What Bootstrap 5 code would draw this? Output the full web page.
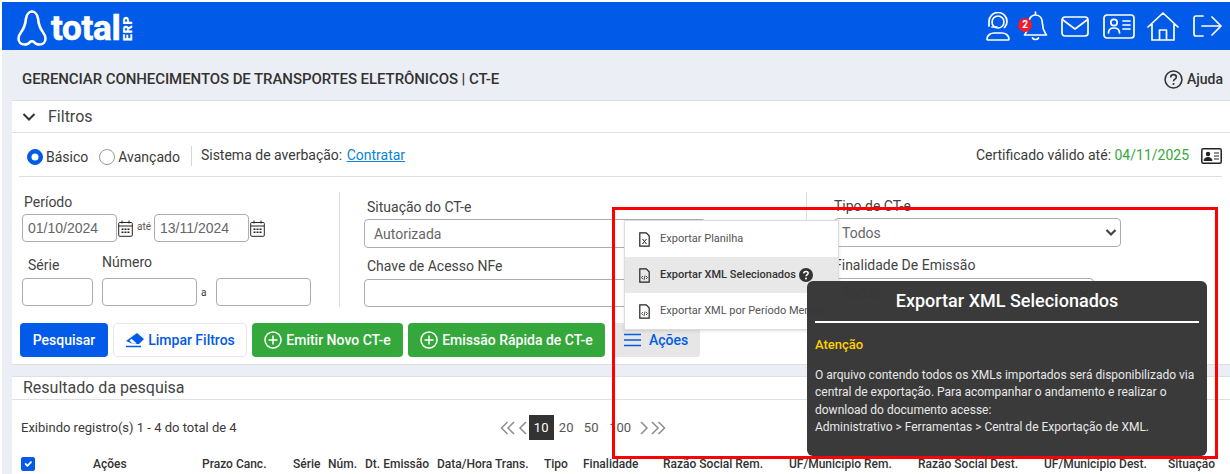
<!DOCTYPE html>
<html lang="pt-BR"><head><meta charset="utf-8"><title>CT-e</title>
<link href="https://cdn.jsdelivr.net/npm/bootstrap@5.3.0/dist/css/bootstrap.min.css" rel="stylesheet">
<style>
html,body{height:474px;overflow:hidden}
body{font-family:Roboto,sans-serif;background:#fff;color:#3a3a3a;font-size:14px;padding:2px 0 0 2px;position:relative}
.shell{background:#ebeef4;height:472px;overflow:hidden}
.topbar{background:#015be8;height:48px;padding:0 8px 0 15px}
.logo-word{color:#fff;font:700 35px/1 Roboto,sans-serif;margin:4px 0 0 3px;letter-spacing:-.3px;-webkit-text-stroke:.6px #fff}
.logo-erp{color:#fff;font:900 13px/1 Roboto,sans-serif;writing-mode:vertical-rl;transform:rotate(180deg);margin:6px 0 0 1px;letter-spacing:.3px}
.tb-ico{fill:none;stroke:#fff;stroke-width:1.7;stroke-linecap:round;stroke-linejoin:round;display:block}
.bell-wrap{position:relative}
.bell-badge{position:absolute;left:-5px;top:7px;width:14px;height:14px;border-radius:50%;background:#ed1c2e;color:#fff;font:700 10px/14px Roboto,sans-serif;text-align:center}
.title-bar{height:50px;padding:8px 7px 0 20px}
.page-title{font-weight:500;font-size:15px;color:#333;margin:0;letter-spacing:-.08px}
.help-lnk{font-weight:500;font-size:14px;color:#333}
.panel{background:#fff;margin-left:10px;border-top:1px solid #dcdfe4;border-bottom:1px solid #dcdfe4}
.panel-head{height:32px;border-bottom:1px solid #dcdfe4;padding-left:10px;font-size:16px;color:#444}
.status-row{height:44px;margin:0 8px 0 7px;border-bottom:1px solid #dcdfe4;padding:2px 0 0 8px;font-size:14px}
.status-row .form-check-input{width:16px;height:16px;margin:0 3px 0 0;flex:none;border-color:#999}
.rad-group{margin-top:3px}
.form-check-input:checked{background-color:#015be8;border-color:#015be8}
.vbar{width:1px;height:20px;background:#d6d6d6;margin:0 9px 0 11px}
.status-row a{color:#0a84d6;margin-left:1px}
.ok-date{color:#34a83a}
.filters{display:grid;grid-template-columns:328px 467px 1fr;height:146px;padding-top:15px}
.fcol1{padding:0 0 0 10px;border-right:1px solid #dedede;height:115px}
.fcol2{padding:0 0 0 24px;border-right:1px solid #dedede;height:115px}
.fcol3{padding:0 0 0 27px}
.lbl{font-size:14px;color:#444;display:block;line-height:16px}
.form-control.inp,.form-select.inp{height:28px;min-height:0;font-size:14px;color:#666;border-color:#adadad;border-radius:4px;padding:2px 5px;font-family:Roboto,sans-serif}
.form-select.inp{padding:4px 24px 2px 9px;height:29px;background-position:right 3px center;background-size:12px 9px;background-image:url("data:image/svg+xml,%3csvg xmlns='http://www.w3.org/2000/svg' viewBox='0 0 12 9'%3e%3cpath fill='none' stroke='%23444' stroke-width='2.200' d='M1.500 2l4.500 4.500L10.500 2'/%3e%3c/svg%3e")}
.inp-date{width:95px;font-family:"Liberation Sans",sans-serif!important}
.cal{display:block;margin:1px 0 0 1px;flex:none}
.ate{font-size:10px;margin:-3px 3px 0 4px;color:#555}
.w-serie{width:71px}.w-num{width:95px}.w-wide{width:342px}.w-chave{width:419px}.w-tipo{width:287px}.w-fin{width:262px}
.act-row{padding-left:8px;gap:5px;height:41px;padding-bottom:7px}
.act{height:34px;border-radius:4px;font-weight:500;font-size:14px;padding:0;display:flex;align-items:center;justify-content:center;gap:3px;border:0}
.act-blue{background:#015be8;color:#fff;width:88px}
.act-clear{background:#fff;border:1px solid #e6e6e6;color:#015be8;width:134px}
.act-green{background:#34a83a;color:#fff;gap:4px}
.w-emit{width:151px}.w-rapid{width:197px}
.act-more{background:#e6e6e6;color:#015be8;width:88px;margin-left:2px;gap:8px;border-radius:0 0 4px 4px}
.panel-res{margin-top:11px;height:120px;overflow:hidden}
.res-head{height:23px;border-bottom:1px solid #dcdfe4;padding-left:11px;font-size:16px;color:#444;line-height:21px}
.pager-row{height:55px;padding:0 0 0 9px;font-size:13px;position:relative}
.pager{margin-left:263px;gap:0;color:#555}
.pg-num{display:block;width:25px;line-height:25px;text-align:center;font-size:13px}
.pg-on{background:#333;color:#fff}
.pg-ar{fill:none;stroke:#8c8c8c;stroke-width:1.5;display:block}
.tbl-head{table-layout:fixed;width:1210px;margin:0 0 0 9px;font-size:12px;font-weight:500;color:#333}
.tbl-head th{font-weight:500;padding:0;white-space:nowrap;line-height:18px;vertical-align:middle;border:0;overflow:visible}
.tbl-head .form-check-input{width:14px;height:14px;margin:0;display:block;border-radius:2px}
.red-box{position:absolute;left:612px;top:207px;width:606px;height:252px;border:3px solid #f00;pointer-events:none;z-index:5}
.drop-menu{position:absolute;left:624px;top:220px;width:215px;height:110px;background:rgba(255,255,255,.97);border:1px solid #dcdcdc;box-shadow:0 1px 3px rgba(0,0,0,.12);padding:0;z-index:3;overflow:hidden;display:block;border-radius:0;min-width:0;margin:0}
.drop-item{height:36px;padding:0 0 0 14px;font-size:11px;color:#555;white-space:nowrap;gap:10px}
.drop-hot{background:#e8e8e8;font-weight:500;color:#333}
.tip{position:absolute;left:807px;top:281px;width:400px;height:175px;background:rgba(54,54,54,.98);border-radius:6px;color:#eee;padding:0 8px;z-index:4}
.tip-t{font-size:18px;font-weight:500;text-align:center;color:#fff;line-height:39px;height:42px;margin:0;border-bottom:2px solid #fff}
.tip-a{color:#ffd000;font-weight:500;font-size:13px;margin:0;line-height:16px;padding-top:14px}
.tip-b{font-size:12px;line-height:17.400px;margin:14px 0 0;color:#e8e8e8}
</style></head><body>
<div class="shell">
<header class="topbar d-flex align-items-center justify-content-between">
  <div class="d-flex align-items-center">
    <svg width="31" height="36" viewBox="0 0 31 36" class="tb-ico" style="stroke-width:2.600;margin-top:4px"><path d="M15.500 1.500c-3.500 0-6 3-6.500 7-.5 5-1.500 9-4.500 13-1.500 2-3 4-3 7 0 3.500 2.500 6 6 6 3 0 4.500-1 5.500-2.500 1-1 3-1 4 0 1 1.500 2.500 2.500 5.500 2.500 3.500 0 6-2.500 6-6 0-3-1.500-5-3-7-3-4-4-8-4.500-13-.5-4-3-7-6.500-7z"/></svg>
    <span class="logo-word">total</span><span class="logo-erp">ERP</span>
  </div>
  <div class="d-flex align-items-center">
    <svg width="26" height="29" viewBox="0 0 26 29" class="tb-ico"><circle cx="13" cy="10" r="6"/><path d="M4 14V9.500a9 9 0 0 1 18 0c0 2.500-1 4.500-2.500 6"/><path d="M7 15h5"/><path d="M2 27c0-4 4-6 7-6h8c3 0 7 2 7 6 0 .6-.4 1-1 1H3c-.6 0-1-.4-1-1z"/></svg>
    <div class="bell-wrap" style="margin-left:12px"><svg width="25" height="30" viewBox="0 0 25 30" class="tb-ico"><path d="M12.500 1v3M12.500 4c-4.500 0-7 4-7 9 0 6-2 8-4 11h22c-2-3-4-5-4-11 0-5-2.500-9-7-9zM9.500 27c1 2 5 2 6 0"/></svg><span class="bell-badge">2</span></div>
    <svg width="28" height="21" viewBox="0 0 28 21" class="tb-ico" style="margin-left:13px"><rect x="1" y="1" width="26" height="19" rx="3"/><path d="M2 4l12 9 12-9"/></svg>
    <svg width="32" height="25" viewBox="0 0 32 25" class="tb-ico" style="margin-left:14px"><rect x="1" y="1" width="30" height="23" rx="3"/><circle cx="11" cy="8.500" r="3.200"/><path d="M5.500 19c0-3.500 2.500-5 5.500-5s5.500 1.500 5.500 5M20 7h7M20 11h7M20 15h7"/></svg>
    <svg width="32" height="29" viewBox="0 0 32 29" class="tb-ico" style="margin-left:12px"><path d="M1 15L16 1l15 14M5 12v16h22V12M12.500 28V18h7v10"/></svg>
    <svg width="29" height="22" viewBox="0 0 29 22" class="tb-ico" style="margin-left:14px"><path d="M10 1H3a2 2 0 0 0-2 2v16a2 2 0 0 0 2 2h7M9 11h19M19 2l9 9-9 9"/></svg>
  </div>
</header>
<div class="title-bar d-flex align-items-center justify-content-between">
  <h1 class="page-title">GERENCIAR CONHECIMENTOS DE TRANSPORTES ELETRÔNICOS | CT-E</h1>
  <span class="help-lnk d-flex align-items-center gap-1"><svg width="19" height="19" viewBox="0 0 18 18"><circle cx="9" cy="9" r="8" fill="none" stroke="#333" stroke-width="1.500"/><path d="M6.300 7c0-1.700 1.200-2.600 2.700-2.600s2.700.9 2.700 2.300c0 2-2.700 2-2.700 4" fill="none" stroke="#333" stroke-width="1.500"/><circle cx="9" cy="13.300" r="1" fill="#333"/></svg>Ajuda</span>
</div>
<section class="panel">
  <div class="panel-head d-flex align-items-center"><svg width="14" height="10" viewBox="0 0 14 10" style="margin-right:12px"><path d="M1.500 2l5.500 5.500L12.500 2" fill="none" stroke="#333" stroke-width="2"/></svg>Filtros</div>
  <div class="status-row d-flex align-items-center justify-content-between">
    <div class="d-flex align-items-center">
      <div class="rad-group d-flex align-items-center">
      <input class="form-check-input" type="radio" name="m" checked aria-label="Básico"><span style="margin-right:11px">Básico</span>
      <input class="form-check-input" type="radio" name="m" aria-label="Avançado"><span>Avançado</span>
      </div>
      <span class="vbar"></span><span>Sistema de averbação: <a href="#">Contratar</a></span>
    </div>
    <div class="d-flex align-items-center"><span>Certificado válido até: <span class="ok-date">04/11/2025</span></span>
      <svg width="21" height="16" viewBox="0 0 21 16" style="margin-left:12px"><rect x=".8" y=".8" width="19.400" height="14.400" rx="1.500" fill="none" stroke="#222" stroke-width="1.500"/><circle cx="7" cy="6" r="2.200" fill="#222"/><path d="M3 12.500c0-2 2-3 4-3s4 1 4 3zM13 5h5M13 8h5M13 11h5" fill="#222" stroke="#222"/></svg></div>
  </div>
  <div class="filters">
    <div class="fcol1">
      <label class="lbl" style="padding-left:2px;margin:2px 0 4px">Período</label>
      <div class="d-flex align-items-center">
        <input class="form-control inp inp-date" value="01/10/2024" aria-label="Início">
        <svg class="cal" width="15" height="17" viewBox="0 0 15 17"><rect x=".7" y="2.500" width="13.600" height="13.800" rx="1" fill="none" stroke="#222"/><path d="M1 6h13M4 .5v3M11 .5v3" stroke="#222"/><path d="M3.500 8.500h2v1.500h-2zM6.500 8.500h2v1.500h-2zM9.500 8.500h2v1.500h-2zM3.500 11.500h2v1.500h-2zM6.500 11.500h2v1.500h-2zM9.500 11.500h2v1.500h-2z" fill="#222"/></svg>
        <span class="ate">até</span>
        <input class="form-control inp inp-date" value="13/11/2024" aria-label="Fim">
        <svg class="cal" width="15" height="17" viewBox="0 0 15 17"><rect x=".7" y="2.500" width="13.600" height="13.800" rx="1" fill="none" stroke="#222"/><path d="M1 6h13M4 .5v3M11 .5v3" stroke="#222"/><path d="M3.500 8.500h2v1.500h-2zM6.500 8.500h2v1.500h-2zM9.500 8.500h2v1.500h-2zM3.500 11.500h2v1.500h-2zM6.500 11.500h2v1.500h-2zM9.500 11.500h2v1.500h-2z" fill="#222"/></svg>
      </div>
      <div class="d-flex" style="margin-top:12px">
        <div style="margin-right:9px"><label class="lbl" style="padding:3px 0 5px 6px">Série</label><input class="form-control inp w-serie" aria-label="Série"></div>
        <div><label class="lbl" style="padding-bottom:8px">Número</label>
          <div class="d-flex align-items-center"><input class="form-control inp w-num" aria-label="Número inicial"><span style="font-size:10px;margin:0 10px 0 4px">a</span><input class="form-control inp w-num" aria-label="Número final"></div></div>
      </div>
    </div>
    <div class="fcol2">
      <label class="lbl" style="padding-left:3px;margin:7px 0 4px">Situação do CT-e</label>
      <select class="form-select inp w-wide" aria-label="Situação"><option>Autorizada</option></select>
      <label class="lbl" style="padding-left:3px;margin:10px 0 5px">Chave de Acesso NFe</label>
      <input class="form-control inp w-chave" aria-label="Chave">
    </div>
    <div class="fcol3">
      <label class="lbl" style="margin:6px 0 4px">Tipo de CT-e</label>
      <select class="form-select inp w-tipo" style="padding-left:7px" aria-label="Tipo"><option>Todos</option></select>
      <label class="lbl" style="margin:10px 0 5px">Finalidade De Emissão</label>
      <select class="form-select inp w-fin" style="margin-left:-2px" aria-label="Finalidade"><option>Todas</option></select>
    </div>
  </div>
  <div class="act-row d-flex">
    <button class="btn act act-blue">Pesquisar</button>
    <button class="btn act act-clear"><svg width="20" height="16" viewBox="0 0 20 16"><path d="M12 1l7 6-5 5H8L1 9z" fill="#015be8"/><path d="M1 14.500h15" stroke="#015be8" stroke-width="1.500"/><path d="M4.500 8.500l2-1.700 5 4.500-.5.500H7.500z" fill="#fff"/></svg>Limpar Filtros</button>
    <button class="btn act act-green w-emit"><svg width="18" height="18" viewBox="0 0 18 18"><circle cx="9" cy="9" r="8" fill="none" stroke="#fff" stroke-width="1.500"/><path d="M9 4.500v9M4.500 9h9" stroke="#fff" stroke-width="1.500"/></svg>Emitir Novo CT-e</button>
    <button class="btn act act-green w-rapid"><svg width="18" height="18" viewBox="0 0 18 18"><circle cx="9" cy="9" r="8" fill="none" stroke="#fff" stroke-width="1.500"/><path d="M9 4.500v9M4.500 9h9" stroke="#fff" stroke-width="1.500"/></svg>Emissão Rápida de CT-e</button>
    <button class="btn act act-more"><svg width="17" height="14" viewBox="0 0 17 14"><path d="M0 1.500h17M0 7h17M0 12.500h17" stroke="#015be8" stroke-width="1.700"/></svg>Ações</button>
  </div>
</section>
<section class="panel panel-res">
  <div class="res-head">Resultado da pesquisa</div>
  <div class="pager-row d-flex align-items-center">
    <span>Exibindo registro(s) 1 - 4 do total de 4</span>
    <div class="pager d-flex align-items-center">
      <svg class="pg-ar" width="15" height="14" viewBox="0 0 15 14"><path d="M7.500 1L1.500 7l6 6M14 1L8 7l6 6"/></svg>
      <svg class="pg-ar" width="13" height="14" viewBox="0 0 13 14" style="margin-left:1px"><path d="M10 1L4 7l6 6"/></svg>
      <span class="pg-num pg-on">10</span><span class="pg-num">20</span><span class="pg-num">50</span><span class="pg-num" style="width:33px">100</span>
      <svg class="pg-ar" width="13" height="14" viewBox="0 0 13 14" style="margin-left:1px"><path d="M3 1l6 6-6 6"/></svg>
      <svg class="pg-ar" width="15" height="14" viewBox="0 0 15 14"><path d="M1 1l6 6-6 6M7.500 1l6 6-6 6"/></svg>
    </div>
  </div>
  <table class="table tbl-head"><colgroup><col style="width:72px"><col style="width:109px"><col style="width:91px"><col style="width:35px"><col style="width:37px"><col style="width:72px"><col style="width:107px"><col style="width:39px"><col style="width:80px"><col style="width:126px"><col style="width:129px"><col style="width:126px"><col style="width:124px"><col style="width:63px"></colgroup>
  <thead><tr><th><input class="form-check-input" type="checkbox" checked aria-label="Todos"></th><th>Ações</th><th>Prazo Canc.</th><th>Série</th><th>Núm.</th><th>Dt. Emissão</th><th>Data/Hora Trans.</th><th>Tipo</th><th>Finalidade</th><th>Razão Social Rem.</th><th>UF/Município Rem.</th><th>Razão Social Dest.</th><th>UF/Município Dest.</th><th>Situação</th></tr></thead></table>
</section>
</div>
<div class="drop-menu">
  <div class="drop-item d-flex align-items-center"><svg width="11" height="15" viewBox="0 0 11 15"><path d="M.8.8h6.400l3 3v10.400H.8z" fill="none" stroke="#222" stroke-width="1.200"/><path d="M3.500 7l4 5M7.500 7l-4 5" stroke="#222"/></svg>Exportar Planilha</div>
  <div class="drop-item drop-hot d-flex align-items-center"><svg width="11" height="15" viewBox="0 0 11 15"><path d="M.8.8h6.400l3 3v10.400H.8z" fill="none" stroke="#222" stroke-width="1.200"/><path d="M4 8L2.500 9.500 4 11M7 8l1.500 1.500L7 11M6 7.500l-1 4.500" fill="none" stroke="#222" stroke-width=".8"/></svg><span>Exportar XML Selecionados</span><svg style="margin-left:-7px" width="14" height="14" viewBox="0 0 14 14"><circle cx="7" cy="7" r="7" fill="#333"/><path d="M4.800 5.500c0-1.300 1-2 2.200-2s2.200.7 2.200 1.800c0 1.500-2.200 1.600-2.200 3" fill="none" stroke="#fff" stroke-width="1.500"/><circle cx="7" cy="10.500" r="1" fill="#fff"/></svg></div>
  <div class="drop-item d-flex align-items-center"><svg width="11" height="15" viewBox="0 0 11 15"><path d="M.8.8h6.400l3 3v10.400H.8z" fill="none" stroke="#222" stroke-width="1.200"/><path d="M4 8L2.500 9.500 4 11M7 8l1.500 1.500L7 11M6 7.500l-1 4.500" fill="none" stroke="#222" stroke-width=".8"/></svg>Exportar XML por Período Mensal</div>
</div>
<div class="tip">
  <h2 class="tip-t">Exportar XML Selecionados</h2>
  <p class="tip-a">Atenção</p>
  <p class="tip-b">O arquivo contendo todos os XMLs importados será disponibilizado via central de exportação. Para acompanhar o andamento e realizar o download do documento acesse:<br>Administrativo &gt; Ferramentas &gt; Central de Exportação de XML.</p>
</div>
<div class="red-box"></div>
<script src="https://cdn.jsdelivr.net/npm/bootstrap@5.3.0/dist/js/bootstrap.bundle.min.js"></script>
</body></html>
